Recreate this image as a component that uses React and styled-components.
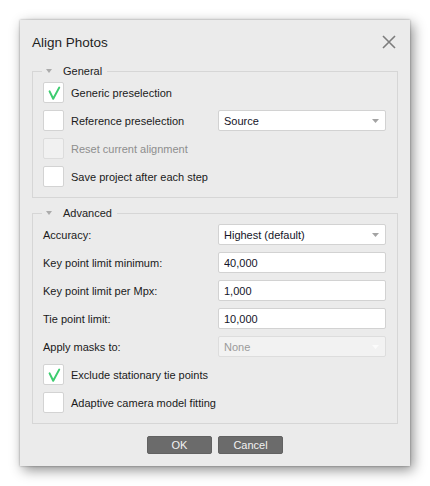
import React from "react";
import styled, { createGlobalStyle } from "styled-components";

const GlobalStyle = createGlobalStyle`
  html, body { margin: 0; padding: 0; background: #ffffff; }
  body { font-family: "Liberation Sans", Arial, sans-serif; }
  * { box-sizing: border-box; }
`;

const Page = styled.div`
  padding: 20px 0 0 20px;
  width: 430px;
  height: 486px;
`;

const Dialog = styled.div`
  width: 390px;
  height: 446px;
  background: #ebebeb;
  padding: 0 12px 12px 12px;
  display: flex;
  flex-direction: column;
  box-shadow: 0 0 2px rgba(0, 0, 0, 0.35), 3px 4px 12px rgba(0, 0, 0, 0.45);
`;

const Header = styled.div`
  display: flex;
  align-items: center;
  justify-content: space-between;
  padding: 14px 2px 11px 0;
`;

const Title = styled.div`
  font-size: 13.5px;
  line-height: 18px;
  color: #1e1e1e;
`;

const CloseBtn = styled.div`
  width: 14px;
  height: 14px;
  display: flex;
  margin-top: -2px;
`;

const Group = styled.fieldset`
  margin: ${(p) => (p.$first ? "0" : "7px 0 0 0")};
  border: 1px solid #d6d6d6;
  padding: 3px 11px 10px 10px;
  min-width: 0;
`;

const Legend = styled.legend`
  display: flex;
  align-items: center;
  height: 16px;
  padding: 0 5px 0 4px;
  margin-left: -1px;
  font-size: 11px;
  line-height: 16px;
  color: #222;
`;

const LegendArrow = styled.svg`
  width: 6px;
  height: 4px;
  margin-right: 11px;
  flex: none;
`;

const Rows = styled.div`
  display: flex;
  flex-direction: column;
  gap: 7px;
`;

const CheckRow = styled.div`
  display: flex;
  align-items: center;
  gap: 7px;
  height: 21px;
`;

const FormRow = styled.div`
  display: grid;
  grid-template-columns: 1fr 168px;
  align-items: center;
  height: 21px;
`;

const Box = styled.div`
  width: 21px;
  height: 21px;
  flex: none;
  border: 1px solid ${(p) => (p.$disabled ? "#dcdcdc" : "#d3d3d3")};
  border-radius: 2px;
  background: ${(p) => (p.$disabled ? "#f1f1f1" : "#ffffff")};
  display: flex;
`;

const Label = styled.span`
  font-size: 11px;
  line-height: 14px;
  color: ${(p) => (p.$disabled ? "#8e8e8e" : "#1a1a1a")};
  white-space: nowrap;
`;

const Combo = styled.div`
  height: 21px;
  border: 1px solid ${(p) => (p.$disabled ? "#dddddd" : "#d2d2d2")};
  border-radius: 2px;
  background: ${(p) => (p.$disabled ? "#f2f2f2" : "#ffffff")};
  padding: 0 6px 0 5px;
  display: flex;
  align-items: center;
  justify-content: space-between;
  font-size: 11px;
  color: ${(p) => (p.$disabled ? "#9a9a9a" : "#141428")};
`;

const ComboArrow = styled.svg`
  width: 7px;
  height: 4px;
  flex: none;
`;

const Field = styled.input`
  height: 21px;
  width: 168px;
  border: 1px solid #d2d2d2;
  border-radius: 2px;
  background: #ffffff;
  padding: 0 5px;
  margin: 0;
  font-family: "Liberation Sans", Arial, sans-serif;
  font-size: 11px;
  color: #141428;
  outline: none;
`;

const Footer = styled.div`
  display: flex;
  justify-content: center;
  gap: 6px;
  margin-top: 12px;
`;

const Button = styled.button`
  width: 65px;
  height: 18px;
  border: 1px solid #626262;
  border-radius: 2px;
  background: #6b6b6b;
  color: #f2f2f2;
  font-family: "Liberation Sans", Arial, sans-serif;
  font-size: 11px;
  padding: 0;
  line-height: 16px;
`;

const Check = () => (
  <svg width="19" height="19" viewBox="0 0 19 19">
    <path
      d="M5.6 8.4 L9.2 15.8 L15.2 4.6"
      fill="none"
      stroke="#3dcc6f"
      strokeWidth="2"
      strokeLinecap="round"
      strokeLinejoin="round"
    />
  </svg>
);

const Checkbox = ({ checked, disabled, label }) => (
  <CheckRow>
    <Box $disabled={disabled}>{checked && <Check />}</Box>
    <Label $disabled={disabled}>{label}</Label>
  </CheckRow>
);

const Select = ({ value, disabled }) => (
  <Combo $disabled={disabled}>
    <span>{value}</span>
    <ComboArrow viewBox="0 0 7 4">
      <path d="M0 0 L7 0 L3.5 4 Z" fill={disabled ? "#fbfbfb" : "#a3a3a3"} />
    </ComboArrow>
  </Combo>
);

const GroupLegend = ({ children }) => (
  <Legend>
    <LegendArrow viewBox="0 0 6 4">
      <path d="M0 0 L6 0 L3 4 Z" fill="#ababab" />
    </LegendArrow>
    {children}
  </Legend>
);

export default function App() {
  return (
    <Page>
      <GlobalStyle />
      <Dialog>
        <Header>
          <Title>Align Photos</Title>
          <CloseBtn>
            <svg width="14" height="14" viewBox="0 0 14 14">
              <path d="M1 1 L13 13 M13 1 L1 13" stroke="#7c7c7c" strokeWidth="1.6" fill="none" />
            </svg>
          </CloseBtn>
        </Header>

        <Group $first>
          <GroupLegend>General</GroupLegend>
          <Rows>
            <Checkbox checked label="Generic preselection" />
            <FormRow>
              <Checkbox label="Reference preselection" />
              <Select value="Source" />
            </FormRow>
            <Checkbox disabled label="Reset current alignment" />
            <Checkbox label="Save project after each step" />
          </Rows>
        </Group>

        <Group>
          <GroupLegend>Advanced</GroupLegend>
          <Rows>
            <FormRow>
              <Label>Accuracy:</Label>
              <Select value="Highest (default)" />
            </FormRow>
            <FormRow>
              <Label>Key point limit minimum:</Label>
              <Field readOnly value="40,000" />
            </FormRow>
            <FormRow>
              <Label>Key point limit per Mpx:</Label>
              <Field readOnly value="1,000" />
            </FormRow>
            <FormRow>
              <Label>Tie point limit:</Label>
              <Field readOnly value="10,000" />
            </FormRow>
            <FormRow>
              <Label>Apply masks to:</Label>
              <Select value="None" disabled />
            </FormRow>
            <Checkbox checked label="Exclude stationary tie points" />
            <Checkbox label="Adaptive camera model fitting" />
          </Rows>
        </Group>

        <Footer>
          <Button>OK</Button>
          <Button>Cancel</Button>
        </Footer>
      </Dialog>
    </Page>
  );
}
